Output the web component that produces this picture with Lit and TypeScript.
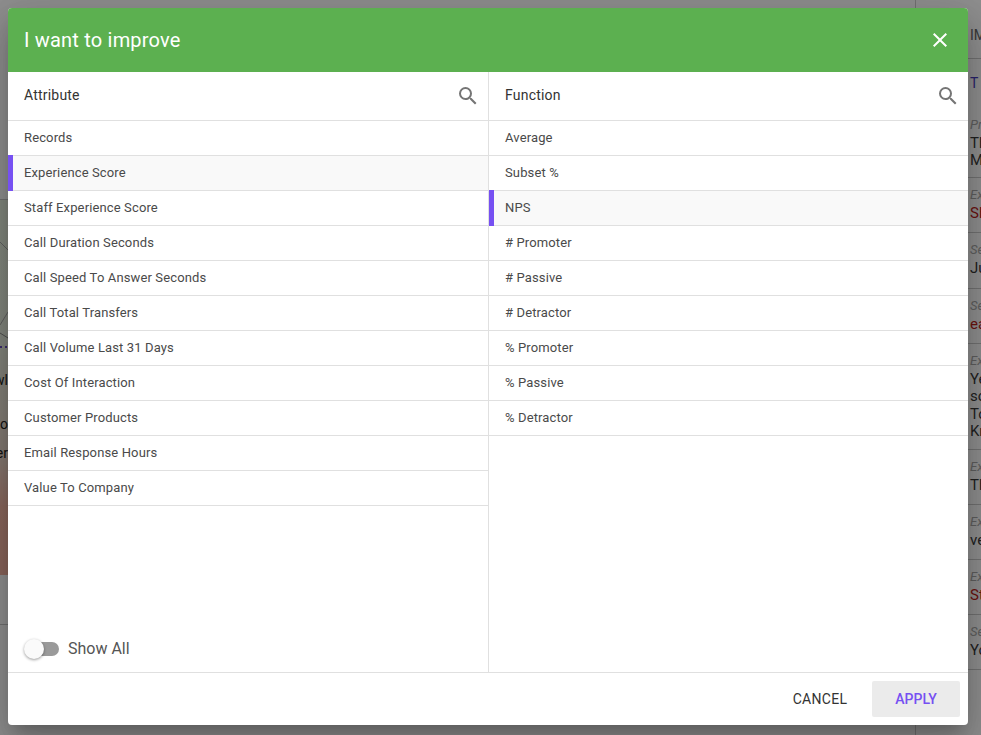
import { LitElement, html, css, svg } from 'lit';
import { customElement } from 'lit/decorators.js';

const ATTRIBUTES = [
  'Records',
  'Experience Score',
  'Staff Experience Score',
  'Call Duration Seconds',
  'Call Speed To Answer Seconds',
  'Call Total Transfers',
  'Call Volume Last 31 Days',
  'Cost Of Interaction',
  'Customer Products',
  'Email Response Hours',
  'Value To Company',
];

const FUNCTIONS = [
  'Average',
  'Subset %',
  'NPS',
  '# Promoter',
  '# Passive',
  '# Detractor',
  '% Promoter',
  '% Passive',
  '% Detractor',
];

// fragments of the page behind the dialog, only the right edge of it shows
const SIDE_ROWS = [
  { label: 'Pre', lines: ['The', 'Mo'], height: 70 },
  { label: 'Exp', lines: ['Sho'], height: 55, red: true },
  { label: 'Sen', lines: ['Jus'], height: 56 },
  { label: 'Sen', lines: ['eas'], height: 55, red: true },
  { label: 'Exp', lines: ['Yes', 'som', 'Tod', 'Kno'], height: 106 },
  { label: 'Exp', lines: ['The'], height: 55 },
  { label: 'Exp', lines: ['ver'], height: 55 },
  { label: 'Exp', lines: ['Sta'], height: 55, red: true },
  { label: 'Sen', lines: ['You'], height: 55 },
];

const searchIcon = svg`<path d="M15.5 14h-.79l-.28-.27A6.47 6.47 0 0 0 16 9.5 6.5 6.5 0 1 0 9.5 16c1.61 0 3.09-.59 4.23-1.57l.27.28v.79l5 4.99L20.49 19l-4.99-5zm-6 0C7.01 14 5 11.99 5 9.5S7.01 5 9.5 5 14 7.01 14 9.5 11.99 14 9.5 14z"/>`;
const closeIcon = svg`<path d="M19 6.41 17.59 5 12 10.59 6.41 5 5 6.41 10.59 12 5 17.59 6.41 19 12 13.41 17.59 19 19 17.59 13.41 12z"/>`;

@customElement('app-root')
export class AppRoot extends LitElement {
  static styles = css`
    :host {
      display: block;
      position: relative;
      width: 981px;
      height: 735px;
      overflow: hidden;
      background: #fff;
      font-family: Roboto, 'Liberation Sans', sans-serif;
      color: #333;
    }

    /* page behind the dialog */
    .page {
      display: grid;
      grid-template-columns: 915px 1fr;
      height: 735px;
    }
    .main {
      display: flex;
      flex-direction: column;
      position: relative;
    }
    .main-top {
      height: 200px;
      border-bottom: 1px solid #c8c8c8;
      box-sizing: border-box;
    }
    .chart {
      height: 375px;
      position: relative;
      background: linear-gradient(180deg, #e8f0df 0%, #e9efe0 38%, #ecd9cc 68%, #f8b9a6 82%, #f6b4a2 100%);
    }
    .chart svg {
      position: absolute;
      left: 0;
      top: 0;
    }
    .chart span {
      position: absolute;
      right: calc(100% - 8px);
      font-size: 14px;
      line-height: 16px;
      color: #222;
      white-space: nowrap;
    }
    .main-foot {
      height: 49px;
      border-bottom: 1px solid #c8c8c8;
    }
    .side {
      border-left: 1px solid #ccc;
      display: flex;
      flex-direction: column;
      padding-left: 54px;
      font-size: 15px;
      white-space: nowrap;
      overflow: hidden;
    }
    .side-title {
      height: 59px;
      box-sizing: border-box;
      padding-top: 27px;
      line-height: 17px;
      font-size: 14px;
      color: #666;
      margin-left: -54px;
      padding-left: 54px;
      border-bottom: 1px solid #ccc;
    }
    .side-link {
      height: 49px;
      box-sizing: border-box;
      padding-top: 15px;
      line-height: 18px;
      font-size: 14px;
      color: #4a3fc0;
    }
    .side-row {
      box-sizing: border-box;
      padding-top: 9px;
      margin-left: -54px;
      padding-left: 54px;
      border-bottom: 1px solid #ccc;
      line-height: 17.3px;
      color: #3c3c3c;
    }
    .side-row em {
      display: block;
      font-size: 13px;
      line-height: 16px;
      margin-bottom: 2px;
      color: #aaa;
    }
    .side-row.red div {
      color: #c0261c;
    }

    .scrim {
      position: absolute;
      inset: 0;
      background: rgba(0, 0, 0, 0.44);
      box-sizing: border-box;
      padding: 8px 13px 10px 8px;
      display: flex;
    }

    .dialog {
      flex: 1;
      display: flex;
      flex-direction: column;
      background: #fff;
      border-radius: 4px;
      overflow: hidden;
      box-shadow: 0 11px 15px -7px rgba(0, 0, 0, 0.2), 0 24px 38px 3px rgba(0, 0, 0, 0.14),
        0 9px 46px 8px rgba(0, 0, 0, 0.12);
    }
    .title {
      height: 64px;
      flex: none;
      display: flex;
      align-items: center;
      justify-content: space-between;
      padding: 0 16px;
      background: #5cb050;
      color: #fff;
      font-size: 20px;
      letter-spacing: 0.2px;
    }
    .title svg {
      width: 24px;
      height: 24px;
      fill: #fff;
      display: block;
    }

    .columns {
      flex: 1;
      min-height: 0;
      display: grid;
      grid-template-columns: 481px 1fr;
    }
    .col {
      display: flex;
      flex-direction: column;
      min-width: 0;
    }
    .col:first-child {
      border-right: 1px solid #e0e0e0;
    }
    .head {
      height: 49px;
      flex: none;
      box-sizing: border-box;
      display: flex;
      align-items: center;
      justify-content: space-between;
      padding: 0 8px 0 16px;
      border-bottom: 1px solid #e0e0e0;
      font-size: 14px;
      letter-spacing: 0.2px;
      color: #333;
    }
    .head span {
      margin-bottom: 2px;
    }
    .head svg {
      width: 24px;
      height: 24px;
      fill: #757575;
      display: block;
    }
    .list {
      flex: 1;
    }
    .item {
      position: relative;
      height: 35px;
      box-sizing: border-box;
      display: flex;
      align-items: center;
      padding: 0 0 2px 16px;
      border-bottom: 1px solid #e0e0e0;
      font-size: 13px;
      letter-spacing: 0.13px;
      color: #4a4a4a;
    }
    .item.selected {
      background: #f9f9f9;
    }
    .item.selected::before {
      content: '';
      position: absolute;
      left: 0;
      top: -1px;
      bottom: -1px;
      width: 5px;
      background: #7650f2;
    }
    .show-all {
      display: flex;
      align-items: center;
      gap: 9px;
      padding: 0 0 14px 16px;
      font-size: 16px;
      color: #555;
    }
    .toggle {
      position: relative;
      width: 33px;
      height: 14px;
      margin-left: 2px;
      box-sizing: border-box;
      border-radius: 7px;
      background: #9a9a9a;
    }
    .toggle::after {
      content: '';
      position: absolute;
      left: -2px;
      top: -3px;
      width: 20px;
      height: 20px;
      border-radius: 50%;
      background: #fafafa;
      box-shadow: 0 1px 3px rgba(0, 0, 0, 0.4);
    }

    .actions {
      flex: none;
      height: 53px;
      box-sizing: border-box;
      border-top: 1px solid #e0e0e0;
      display: flex;
      align-items: center;
      justify-content: flex-end;
      padding: 0 8px 0 0;
      gap: 8px;
    }
    .btn {
      height: 36px;
      box-sizing: border-box;
      border: 0;
      border-radius: 2px;
      background: transparent;
      font: 400 14px Roboto, 'Liberation Sans', sans-serif;
      letter-spacing: 0.3px;
      color: #333;
      padding: 0;
      width: 88px;
    }
    .btn.apply {
      background: #ebebeb;
      color: #7650f2;
      font-weight: 500;
      letter-spacing: 0;
    }
  `;

  renderList(items: string[], selected: string) {
    return html`
      <div class="list">
        ${items.map(
          (name) => html`<div class="item ${name === selected ? 'selected' : ''}">${name}</div>`
        )}
      </div>
    `;
  }

  render() {
    return html`
      <div class="page">
        <div class="main">
          <div class="main-top"></div>
          <div class="chart">
            <svg width="8" height="375" fill="none" stroke="#a9a9a9">
              <path d="M0 42L8 50M8 112L0 125" />
              <path d="M0 133L8 138" stroke="#8c8c8c" />
              <path d="M0 147H8" stroke="#6a4fc0" stroke-dasharray="2 3" stroke-width="2" />
            </svg>
            <span style="top:172px">wl</span>
            <span style="top:216px">o</span>
            <span style="top:245px">er</span>
          </div>
          <div class="main-foot"></div>
        </div>
        <div class="side">
          <div class="side-title">IMPACT</div>
          <div class="side-link">T</div>
          ${SIDE_ROWS.map(
            (row) => html`
              <div class="side-row ${row.red ? 'red' : ''}" style="height:${row.height}px">
                <em>${row.label}</em>
                ${row.lines.map((line) => html`<div>${line}</div>`)}
              </div>
            `
          )}
        </div>
      </div>

      <div class="scrim">
        <div class="dialog">
          <div class="title">
            <span>I want to improve</span>
            <svg viewBox="0 0 24 24">${closeIcon}</svg>
          </div>
          <div class="columns">
            <div class="col">
              <div class="head">
                <span>Attribute</span>
                <svg viewBox="0 0 24 24">${searchIcon}</svg>
              </div>
              ${this.renderList(ATTRIBUTES, 'Experience Score')}
              <div class="show-all">
                <div class="toggle"></div>
                <span>Show All</span>
              </div>
            </div>
            <div class="col">
              <div class="head">
                <span>Function</span>
                <svg viewBox="0 0 24 24">${searchIcon}</svg>
              </div>
              ${this.renderList(FUNCTIONS, 'NPS')}
            </div>
          </div>
          <div class="actions">
            <button class="btn">CANCEL</button>
            <button class="btn apply">APPLY</button>
          </div>
        </div>
      </div>
    `;
  }
}
